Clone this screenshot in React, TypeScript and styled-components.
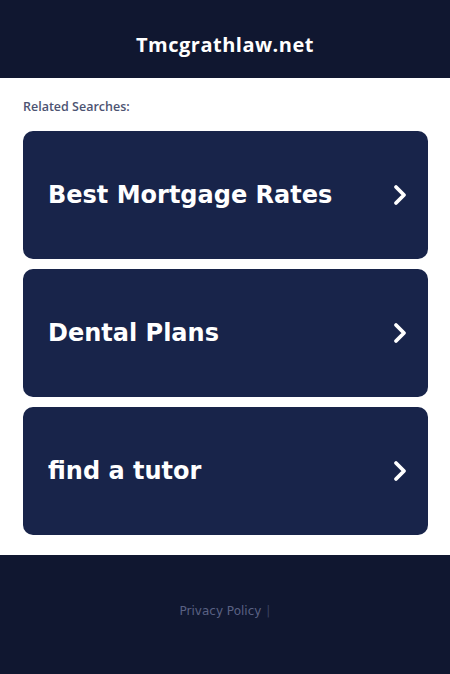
import React from 'react';
import styled, { createGlobalStyle } from 'styled-components';

const GlobalStyle = createGlobalStyle`
    html, body {
        margin: 0;
        padding: 0;
        background: #ffffff;
    }
    body {
        font-family: "DejaVu Sans", "Open Sans", sans-serif;
    }
`;

const Header = styled.header`
    height: 78px;
    box-sizing: border-box;
    padding-top: 10px;
    background: #101730;
    display: flex;
    align-items: center;
    justify-content: center;
`;

const SiteTitle = styled.h1`
    margin: 0;
    color: #ffffff;
    font-family: "Open Sans", "DejaVu Sans", sans-serif;
    font-weight: 700;
    font-size: 20px;
    letter-spacing: 0.5px;
`;

const Main = styled.main`
    padding: 21px 22px 20px 23px;
`;

const Label = styled.div`
    color: #4d5372;
    font-family: "Open Sans", "DejaVu Sans", sans-serif;
    font-size: 12.5px;
    font-weight: 600;
    line-height: 16px;
    margin-bottom: 16px;
`;

const List = styled.div`
    display: flex;
    flex-direction: column;
    gap: 10px;
`;

const Card = styled.a`
    height: 128px;
    border-radius: 10px;
    background: #18244a;
    display: flex;
    align-items: center;
    justify-content: space-between;
    padding: 0 18px 0 25px;
    text-decoration: none;
    color: #ffffff;
`;

const CardText = styled.span`
    font-weight: 700;
    font-size: 24px;
`;

const Footer = styled.footer`
    height: 119px;
    box-sizing: border-box;
    padding-bottom: 8px;
    background: #101730;
    display: flex;
    align-items: center;
    justify-content: center;
`;

const FooterLink = styled.span`
    color: #5a6183;
    font-size: 12px;
    font-family: "DejaVu Sans", sans-serif;
`;

const Sep = styled.span`
    color: #3a4160;
    margin-left: 5px;
`;

const Chevron = () => (
    <svg width="20" height="24" viewBox="0 0 20 24" fill="none">
        <path d="M6 4 L14 12 L6 20" stroke="#ffffff" strokeWidth="3.8" strokeLinecap="round" strokeLinejoin="round" />
    </svg>
);

const searches = ['Best Mortgage Rates', 'Dental Plans', 'find a tutor'];

export default function App() {
    return (
        <>
            <GlobalStyle />
            <Header>
                <SiteTitle>Tmcgrathlaw.net</SiteTitle>
            </Header>
            <Main>
                <Label>Related Searches:</Label>
                <List>
                    {searches.map((s) => (
                        <Card key={s} href="#">
                            <CardText>{s}</CardText>
                            <Chevron />
                        </Card>
                    ))}
                </List>
            </Main>
            <Footer>
                <FooterLink>
                    Privacy Policy<Sep>|</Sep>
                </FooterLink>
            </Footer>
        </>
    );
}
